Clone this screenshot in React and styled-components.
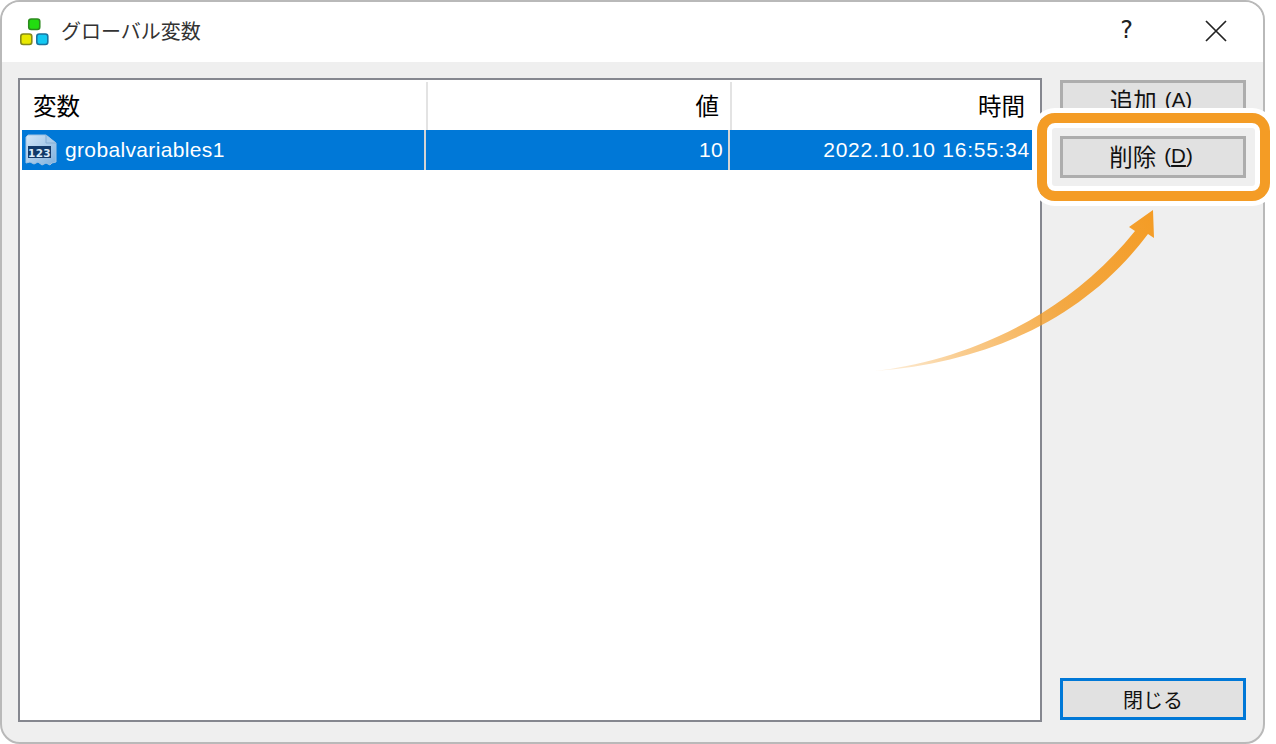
import React from "react";
import styled, { createGlobalStyle } from "styled-components";

const Global = createGlobalStyle`
  html, body { margin: 0; padding: 0; background: #fff; }
  * { box-sizing: border-box; }
`;
const JP = `"Noto Sans CJK JP", "Liberation Sans", sans-serif`;
const Page = styled.div`
  position: relative;
  width: 1276px;
  height: 744px;
  overflow: hidden;
  background: #fff;
  font-family: ${JP};
  color: #111;
`;
const Win = styled.div`
  width: 1265px;
  height: 744px;
  border: 2px solid #b9b9b9;
  border-radius: 20px;
  overflow: hidden;
  background: #efefef;
  display: flex;
  flex-direction: column;
`;
const TitleBar = styled.div`
  height: 60px;
  flex: none;
  background: #fff;
  display: flex;
  align-items: center;
  padding: 0 36px 0 18px;
`;
const Title = styled.span`
  margin: 0 0 2px 11px;
  font-size: 20px;
  color: #333;
  line-height: 24px;
  flex: 1;
`;
const Help = styled.span`
  font-size: 24px;
  font-family: "DejaVu Sans", sans-serif;
  margin: 0 72px 4px 0;
  color: #222;
`;
const CloseSvg = styled.svg`
  margin-bottom: 3px;
`;
const Body = styled.div`
  flex: 1;
  display: flex;
  gap: 18px;
  padding: 16px 17px 20px 16px;
  min-height: 0;
`;
const List = styled.div`
  flex: 1;
  border: 2px solid #85878f;
  background: #fff;
  display: flex;
  flex-direction: column;
`;
const Head = styled.div`
  height: 50px;
  padding-top: 2px;
  display: grid;
  grid-template-columns: 408px 304px 300px;
`;
const HeadCell = styled.div`
  font-size: 23.5px;
  line-height: 46px;
  color: #000;
  padding: 0 ${p => (p.$left ? "0" : "11px")} 0 ${p => (p.$left ? "13px" : "0")};
  text-align: ${p => (p.$left ? "left" : "right")};
  border-right: ${p => (p.$last ? "none" : "2px solid #e3e3e3")};
  ${p => (p.$last ? "padding-right: 7px;" : "")}
`;
const Row = styled.div`
  margin-left: 2px;
  height: 40px;
  width: 1010px;
  background: #0078d7;
  display: grid;
  grid-template-columns: 404px 304px 302px;
  color: #fff;
  font-family: "Liberation Sans", sans-serif;
  font-size: 21px;
`;
const Cell = styled.div`
  display: flex;
  align-items: center;
  justify-content: ${p => (p.$first ? "flex-start" : "flex-end")};
  padding: ${p => (p.$first ? "0 0 0 3px" : p.$last ? "0 2px 0 0" : "0 5px 0 0")};
  border-right: ${p => (p.$last ? "none" : "2px solid #d4d4d4")};
  white-space: nowrap;
  letter-spacing: ${p => (p.$last ? "0.74px" : "0.35px")};
`;
const RowName = styled.span`
  margin-left: 8px;
`;
const Side = styled.div`
  width: 186px;
  flex: none;
  padding: 2px 0;
  display: flex;
  flex-direction: column;
  gap: 14px;
`;
const Btn = styled.div`
  height: 42px;
  flex: none;
  background: #e1e1e1;
  border: ${p => (p.$primary ? "3px solid #0078d7" : "3px solid #adadad")};
  display: flex;
  align-items: center;
  justify-content: center;
  font-size: ${p => (p.$small ? "20px" : "23.5px")};
  color: #111;
  padding: ${p => (p.$small ? "0" : "0 4px 2px 0")};
  ${p => (p.$bottom ? "margin-top: auto;" : "")}
`;
const Latin = styled.span`
  font-family: "Liberation Sans", sans-serif;
  font-size: 20.5px;
  margin-left: 8px;
`;
const Under = styled.span`
  text-decoration: underline;
  text-underline-offset: 2px;
`;
const Highlight = styled.div`
  position: absolute;
  left: 1037px;
  top: 113px;
  width: 233px;
  height: 88px;
  border: 10px solid #f49c25;
  border-radius: 18px;
  box-shadow: 0 0 0 5px #fff, inset 0 0 0 5px #fff;
`;
const Arrow = styled.svg`
  position: absolute;
  left: 860px;
  top: 200px;
`;

const Logo = () => (
  <svg width="30" height="28" viewBox="0 0 30 28" style={{ flex: "none" }}>
    <rect x="8.75" y="1" width="11" height="10.5" rx="2.5" fill="#22dd10" stroke="#2c8a1e" strokeWidth="1.6" />
    <rect x="0.8" y="16" width="11" height="10.5" rx="2.5" fill="#e8e800" stroke="#858a1a" strokeWidth="1.6" />
    <rect x="16.8" y="16" width="11" height="10.5" rx="2.5" fill="#12c8f2" stroke="#1a75a0" strokeWidth="1.6" />
  </svg>
);
const CloseIcon = () => (
  <CloseSvg width="22" height="22" viewBox="0 0 22 22">
    <path d="M1 1 L21 21 M21 1 L1 21" stroke="#222" strokeWidth="1.7" fill="none" />
  </CloseSvg>
);
const NumIcon = () => (
  <svg width="32" height="33" viewBox="0 0 32 33" style={{ flex: "none" }}>
    <defs>
      <linearGradient id="doc" x1="0" y1="0" x2="1" y2="1">
        <stop offset="0" stopColor="#d3e6f7" />
        <stop offset="1" stopColor="#7fb0dd" />
      </linearGradient>
    </defs>
    <path
      d="M3 1 H21 L31 9 V28 L27 29 L25 31 L21 29 L17 31 L13 28 L9 30 L5 28 L1 29 V3 Z"
      fill="url(#doc)"
      stroke="#9fc2e2"
      strokeWidth="1"
    />
    <path d="M21 1 V9 H31" fill="#a9cbea" stroke="#84add3" strokeWidth="1" />
    <rect x="3" y="12" width="23" height="12" fill="#123a6a" />
    <text x="14.5" y="22.5" textAnchor="middle" fontFamily="DejaVu Sans, sans-serif" fontWeight="700" fontSize="10.5" fill="#dcecfa">123</text>
  </svg>
);

export default function App() {
  return (
    <Page>
      <Global />
      <Win>
        <TitleBar>
          <Logo />
          <Title>グローバル変数</Title>
          <Help>?</Help>
          <CloseIcon />
        </TitleBar>
        <Body>
          <List>
            <Head>
              <HeadCell $left>変数</HeadCell>
              <HeadCell>値</HeadCell>
              <HeadCell $last>時間</HeadCell>
            </Head>
            <Row>
              <Cell $first>
                <NumIcon />
                <RowName>grobalvariables1</RowName>
              </Cell>
              <Cell>10</Cell>
              <Cell $last>2022.10.10 16:55:34</Cell>
            </Row>
          </List>
          <Side>
            <Btn>追加<Latin>(A)</Latin></Btn>
            <Btn>削除<Latin>(<Under>D</Under>)</Latin></Btn>
            <Btn $primary $bottom $small>閉じる</Btn>
          </Side>
        </Body>
      </Win>
      <Highlight />
      <Arrow width="300" height="180" viewBox="860 200 300 180">
        <defs>
          <linearGradient id="arrowFade" gradientUnits="userSpaceOnUse" x1="875" y1="371" x2="1153" y2="210">
            <stop offset="0" stopColor="#f49c25" stopOpacity="0.12" />
            <stop offset="0.25" stopColor="#f49c25" stopOpacity="0.5" />
            <stop offset="0.6" stopColor="#f49c25" stopOpacity="0.85" />
            <stop offset="1" stopColor="#f49c25" stopOpacity="1" />
          </linearGradient>
        </defs>
        <path
          d="M875 371 C 945 363, 1055 330, 1135 231 L1129 227 L1153 210 L1154 238 L1148 234 C 1085 318, 990 362, 875 371 Z"
          fill="url(#arrowFade)"
        />
      </Arrow>
    </Page>
  );
}
